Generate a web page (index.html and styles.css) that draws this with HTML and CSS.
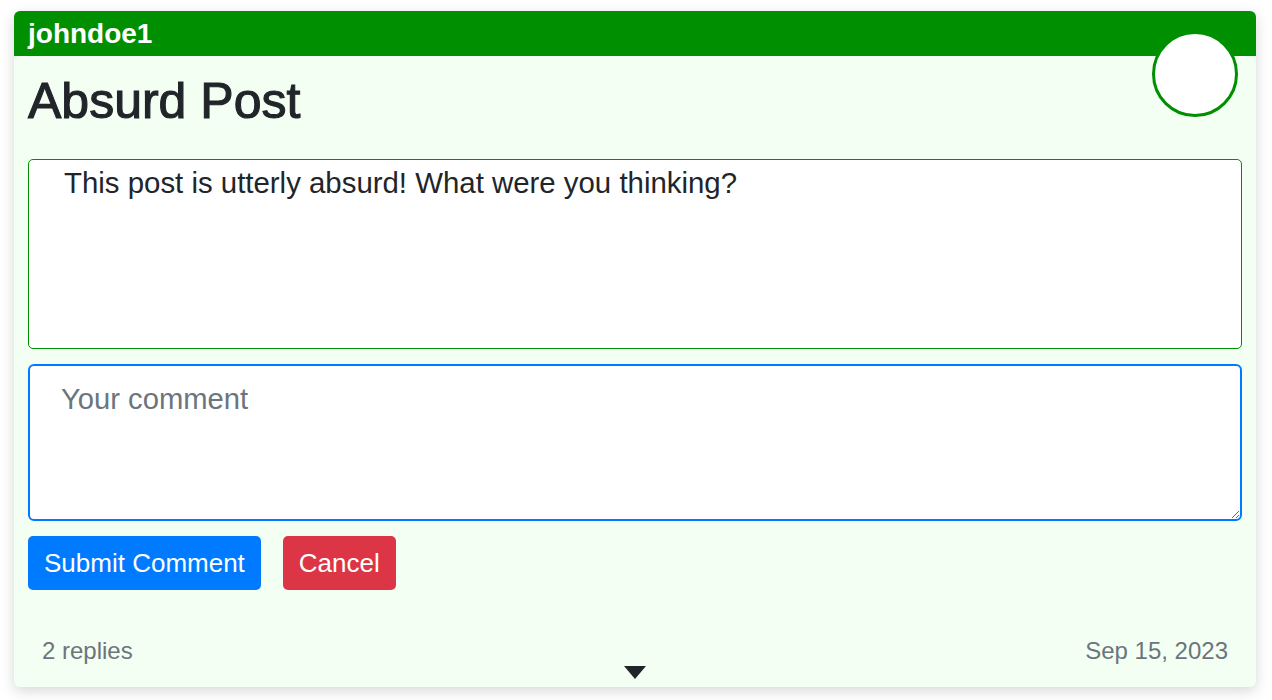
FILE: index.html
```html
<!DOCTYPE html>
<html lang="en">
<head>
<meta charset="utf-8">
<title>Absurd Post</title>
<link rel="stylesheet" href="styles.css">
</head>
<body>
<div class="card">
  <div class="card-header">johndoe1</div>
  <div class="avatar"></div>
  <div class="card-body">
    <h2 class="title">Absurd Post</h2>
    <div class="post-text">This post is utterly absurd! What were you thinking?</div>
    <textarea class="comment-input" placeholder="Your comment"></textarea>
    <div class="actions">
      <button class="btn btn-primary">Submit Comment</button>
      <button class="btn btn-danger">Cancel</button>
    </div>
  </div>
  <div class="card-footer">
    <div class="meta-row">
      <span class="replies">2 replies</span>
      <span class="date">Sep 15, 2023</span>
    </div>
    <div class="caret-row"><span class="caret"></span></div>
  </div>
</div>
</body>
</html>
```
FILE: styles.css
```css
* { box-sizing: border-box; }
html, body { margin: 0; padding: 0; background: #ffffff; }
body {
  font-family: "Liberation Sans", Arial, sans-serif;
  color: #212529;
  padding: 11px 16px 13px 14px;
}
.card {
  position: relative;
  width: 1242px;
  background: #f3fff3;
  border-radius: 6px;
  box-shadow: 0 4px 14px rgba(0, 0, 0, 0.16);
}
.card-header {
  height: 45px;
  background: #008f00;
  color: #ffffff;
  font-weight: bold;
  font-size: 28px;
  line-height: 45px;
  padding: 0 14px;
  border-radius: 6px 6px 0 0;
}
.avatar {
  position: absolute;
  left: 1138px;
  top: 20px;
  width: 86px;
  height: 86px;
  border: 3px solid #008f00;
  border-radius: 50%;
  background: #ffffff;
}
.card-body {
  padding: 15px 14px 0 14px;
}
.title {
  margin: 0 0 28px 0;
  font-size: 50px;
  font-weight: 500;
  line-height: 60px;
  height: 60px;
  -webkit-text-stroke: 1.1px #212529;
}
.post-text {
  height: 190px;
  background: #ffffff;
  border: 1px solid #008f00;
  border-radius: 5px;
  font-size: 29.4px;
  line-height: 35px;
  padding: 5px 35px;
  margin-bottom: 15px;
}
.comment-input {
  display: block;
  width: 100%;
  height: 157px;
  margin: 0 0 15px 0;
  background: #ffffff;
  border: 2px solid #007bff;
  border-radius: 6px;
  font-family: "Liberation Sans", Arial, sans-serif;
  font-size: 29.2px;
  line-height: 35px;
  padding: 16px 31px;
  color: #212529;
  outline: none;
}
.comment-input::placeholder { color: #6c757d; }
.actions {
  display: flex;
  gap: 22px;
}
.btn {
  font-family: "Liberation Sans", Arial, sans-serif;
  font-size: 26px;
  height: 54px;
  line-height: 54px;
  padding: 0 16px;
  border: none;
  border-radius: 5px;
  color: #ffffff;
  cursor: pointer;
}
.btn-primary { background: #007bff; }
.btn-danger { background: #dc3545; }
.card-footer {
  padding: 46px 28px 8px 28px;
}
.meta-row {
  display: flex;
  justify-content: space-between;
  font-size: 24px;
  line-height: 29px;
  color: #6c757d;
}
.caret-row {
  display: flex;
  justify-content: center;
  height: 13px;
  margin-top: 1px;
}
.caret {
  width: 0;
  height: 0;
  border-left: 11px solid transparent;
  border-right: 11px solid transparent;
  border-top: 13px solid #212529;
}
```
